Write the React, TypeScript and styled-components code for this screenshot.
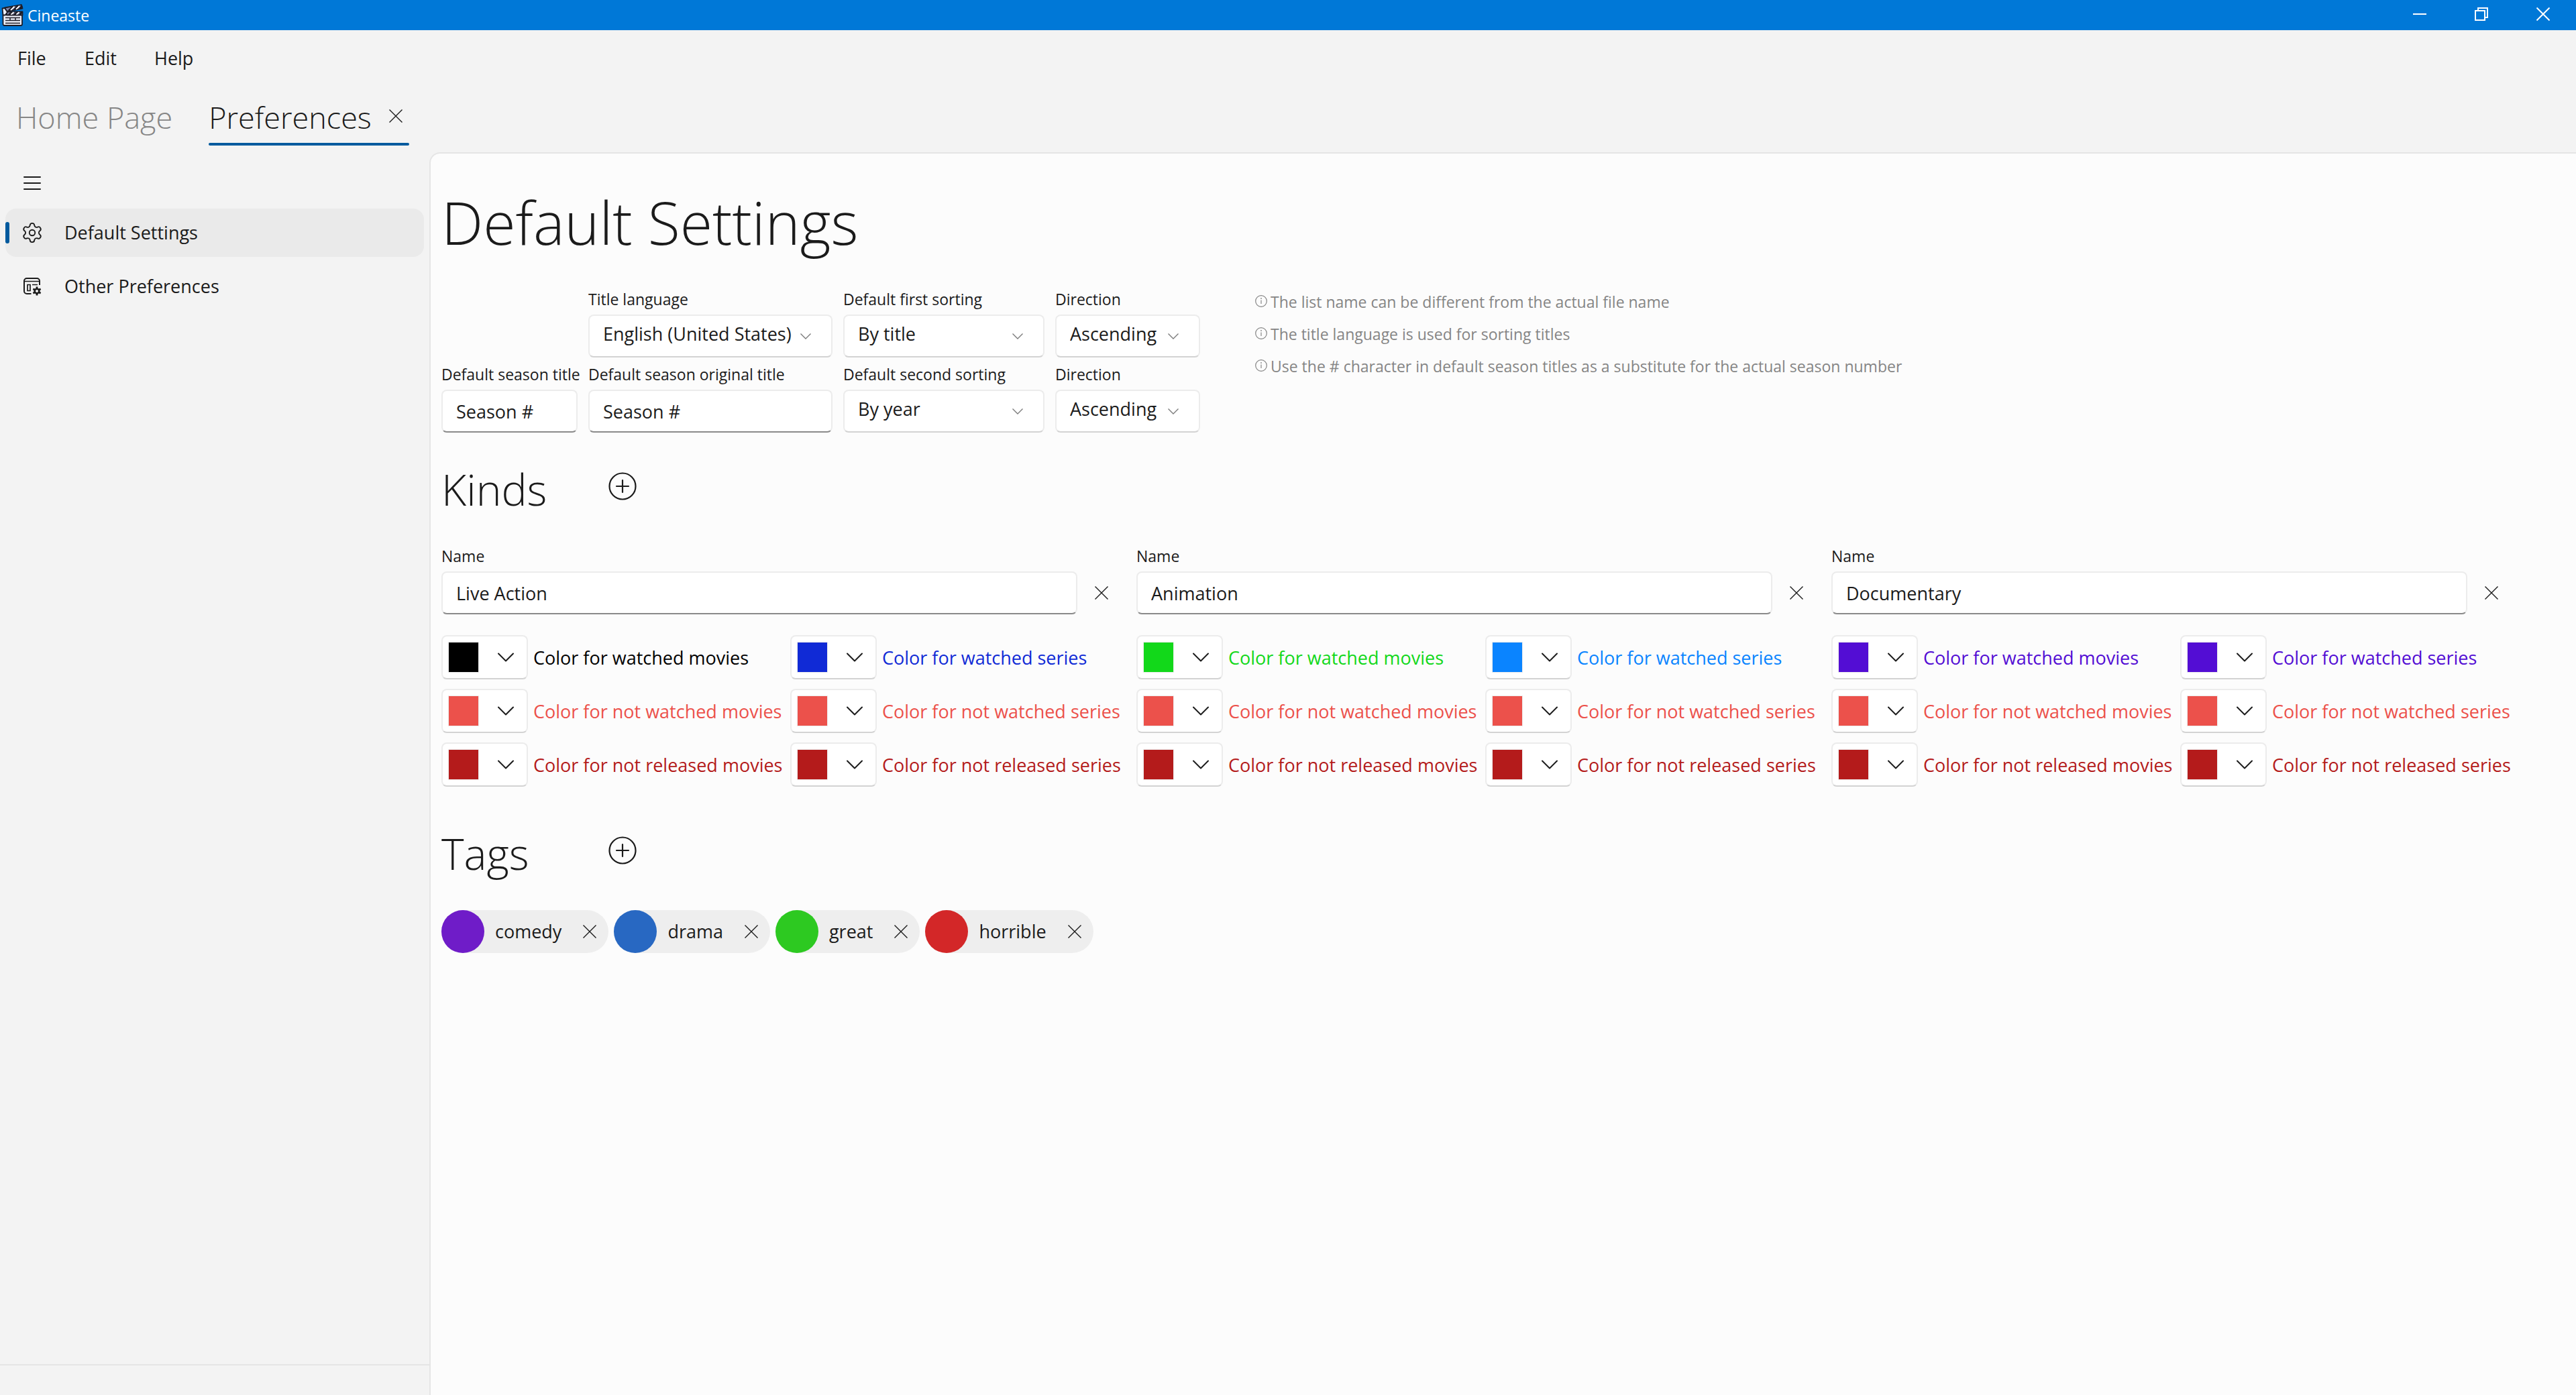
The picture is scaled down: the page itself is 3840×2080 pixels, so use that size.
import React, { useId } from 'react';
import styled, { createGlobalStyle } from 'styled-components';
import { Settings } from 'lucide-react';

const color = {
  accent: '#005a9e',
  titleBar: '#0078d7',
  chrome: '#f3f3f3',
  surface: '#fcfcfc',
  line: '#e5e5e5',
  ink: '#1b1b1b',
  muted: '#858585',
};

const GlobalStyle = createGlobalStyle`
  *, *::before, *::after { box-sizing: border-box; }
  body {
    margin: 0;
    background: ${color.chrome};
    color: ${color.ink};
    font: 400 27px/36px "Open Sans", "Noto Sans", sans-serif;
  }
  h1, h2, ul { margin: 0; padding: 0; }
  button, input, select { font: inherit; color: inherit; margin: 0; }
  button { background: none; border: 0; padding: 0; cursor: pointer; }
  svg { display: block; flex: none; }
`;

/* ---------- window frame ---------- */

const Window = styled.div`
  display: flex;
  flex-direction: column;
  min-height: 100vh;
`;

const TitleBar = styled.header`
  display: flex;
  align-items: center;
  height: 45px;
  padding: 0 3px 0 2px;
  background: ${color.titleBar};
  color: #fff;
`;

const AppName = styled.span`
  flex: 1;
  padding-left: 4px;
  font-size: 23px;
  line-height: 30px;
`;

const CaptionButton = styled.button`
  display: grid;
  place-items: center;
  align-self: flex-start;
  width: 92px;
  height: 42px;
`;

const MenuBar = styled.nav`
  display: flex;
  gap: 8px;
  height: 83px;
  padding-left: 2px;
`;

const MenuButton = styled.button`
  padding: 0 24px;
  min-width: 92px;
  text-align: left;
`;

const TabStrip = styled.div`
  display: flex;
  gap: 54px;
  height: 99px;
  padding: 0 24px 10px;
`;

const Tab = styled.div<{ $active?: boolean }>`
  display: flex;
  flex-direction: column;
  color: ${(p) => (p.$active ? color.ink : '#868686')};

  &::after {
    content: '';
    height: 4px;
    border-radius: 2px;
    background: ${(p) => (p.$active ? color.accent : 'transparent')};
  }
`;

const TabRow = styled.div`
  display: flex;
  flex: 1;
  align-items: center;
  padding-top: 8px;
`;

const TabButton = styled.button`
  font-size: 45px;
  line-height: 64px;
  font-weight: 300;
`;

const TabClose = styled.button`
  display: grid;
  place-items: center;
  width: 40px;
  height: 64px;
  margin: 0 0 4px 16px;
`;

/* ---------- body ---------- */

const Body = styled.div`
  display: flex;
  flex: 1;
`;

const Sidebar = styled.aside`
  display: flex;
  flex-direction: column;
  flex: none;
  width: 640px;
`;

const NavList = styled.nav`
  display: flex;
  flex: 1;
  flex-direction: column;
  gap: 8px;
  padding: 8px 8px 0;
`;

const MenuToggle = styled.button`
  display: grid;
  place-items: center;
  width: 80px;
  height: 76px;
  margin-bottom: -8px;
`;

const NavItem = styled.button<{ $selected?: boolean }>`
  position: relative;
  display: flex;
  align-items: center;
  gap: 8px;
  height: 72px;
  border-radius: 16px;
  background: ${(p) => (p.$selected ? '#eaeaea' : 'transparent')};
  text-align: left;

  &::before {
    content: '';
    display: ${(p) => (p.$selected ? 'block' : 'none')};
    position: absolute;
    left: 0;
    top: 20px;
    width: 6px;
    height: 32px;
    border-radius: 3px;
    background: ${color.accent};
  }
`;

const NavIcon = styled.span`
  display: grid;
  place-items: center;
  width: 80px;
`;

const SidebarFooter = styled.div`
  height: 46px;
  border-top: 2px solid ${color.line};
`;

const Content = styled.main`
  flex: 1;
  min-width: 0;
  padding: 42px 90px 42px 16px;
  background: ${color.surface};
  border: solid ${color.line};
  border-width: 2px 0 0 2px;
  border-top-left-radius: 16px;
`;

const PageTitle = styled.h1`
  font-size: 88px;
  line-height: 120px;
  font-weight: 300;
`;

const SectionHeader = styled.div<{ $gap: number }>`
  display: flex;
  align-items: flex-start;
  margin: ${(p) => p.$gap}px 0 40px;
`;

const SectionTitle = styled.h2`
  min-width: 232px;
  font-size: 64px;
  line-height: 88px;
  font-weight: 300;
`;

const AddButton = styled.button`
  display: grid;
  place-items: center;
  width: 76px;
  height: 78px;
`;

/* ---------- fields ---------- */

const DefaultsSection = styled.section`
  display: flex;
  align-items: flex-start;
  gap: 82px;
  margin-top: 40px;
`;

const FieldGrid = styled.div`
  display: grid;
  grid-template-columns: 203px 364px 300px 216px;
  gap: 10px 16px;
`;

const FieldBox = styled.div`
  display: flex;
  flex-direction: column;
  gap: 8px;
  min-width: 0;
`;

const FieldLabel = styled.label`
  font-size: 23px;
  line-height: 30px;
  white-space: nowrap;
`;

const TextInput = styled.input`
  width: 100%;
  min-width: 0;
  height: 64px;
  padding: 0 20px;
  background: #fff;
  border: 2px solid #ececec;
  border-bottom-color: #8a8a8a;
  border-radius: 8px;
`;

const SelectWrap = styled.div`
  position: relative;

  svg {
    position: absolute;
    right: 32px;
    top: 28px;
    pointer-events: none;
  }
`;

const SelectInput = styled.select`
  display: block;
  width: 100%;
  height: 64px;
  padding: 0 48px 7px 20px;
  appearance: none;
  background: #fff;
  border: 2px solid #ececec;
  border-bottom-color: #d3d3d3;
  border-radius: 8px;
`;

const Notes = styled.ul`
  display: flex;
  flex-direction: column;
  gap: 18px;
  padding-top: 4px;
  list-style: none;
  color: ${color.muted};
  font-size: 23px;
  line-height: 30px;
`;

const Note = styled.li`
  display: flex;
  gap: 5px;

  svg { margin-top: 5px; }
`;

/* ---------- kinds ---------- */

const KindGrid = styled.div`
  display: grid;
  grid-template-columns: repeat(3, minmax(0, 1fr));
  gap: 16px;
`;

const KindNameRow = styled.div`
  display: grid;
  grid-template-columns: 1fr 72px;
  align-items: end;
`;

const RemoveKind = styled.button`
  display: grid;
  place-items: center;
  height: 64px;
`;

const ColorGrid = styled.div`
  display: grid;
  grid-template-columns: 504px 1fr;
  gap: 14px 16px;
  margin-top: 31px;
`;

const ColorRow = styled.div<{ $tint: string }>`
  display: flex;
  align-items: center;
  gap: 8px;
  color: ${(p) => p.$tint};
  white-space: nowrap;
`;

const ColorCaption = styled.span`
  padding-top: 2px;
`;

const ColorButton = styled.button`
  display: flex;
  align-items: center;
  justify-content: space-between;
  flex: none;
  width: 129px;
  height: 66px;
  padding: 0 19px 0 8px;
  color: ${color.ink};
  background: #fff;
  border: 2px solid #ececec;
  border-bottom-color: #d3d3d3;
  border-radius: 8px;
`;

const Swatch = styled.span<{ $tint: string }>`
  width: 46px;
  height: 46px;
  background: ${(p) => p.$tint};
  background-clip: padding-box;
  border: 1px solid #ececec;
`;

/* ---------- tags ---------- */

const TagList = styled.ul`
  display: flex;
  flex-wrap: wrap;
  gap: 8px;
  list-style: none;
`;

const Tag = styled.li`
  display: flex;
  align-items: center;
  height: 64px;
  border-radius: 32px;
  background: #eee;
`;

const TagDot = styled.span<{ $tint: string }>`
  width: 64px;
  height: 64px;
  margin-right: 16px;
  border-radius: 50%;
  background: ${(p) => p.$tint};
`;

const TagClose = styled.button`
  display: grid;
  place-items: center;
  width: 56px;
  height: 64px;
  margin-left: 14px;
`;

/* ---------- icons ---------- */

const Logo = () => (
  <svg width="35" height="33" viewBox="0 0 35 33" aria-hidden="true">
    <g stroke="#1c1c26" strokeWidth="1.8" strokeLinejoin="round">
      <path d="M4 16h27v14a2 2 0 0 1-2 2H4.500a2 2 0 0 1-2-2V16z" fill="#eceef8" />
      <path d="M5 5.500 30 1.200l1.500 5.300L8 11z" fill="#7f83a8" />
      <path d="M8 11.500h23.500v5H8z" fill="#7f83a8" />
      <path d="M1.500 6.500 5 6l4 6-3 4.500H2.500z" fill="#eceef8" />
    </g>
    <path d="M11 10l6-6M19 8.500l6-6M27 7l4-4M11 16l5-4M19 16l5-4M27 16l4-4" stroke="#1c1c26" strokeWidth="2.600" />
    <path d="M14 9.200l5.500-5.600M22 7.800l5-5M14.500 15.600l4-3.400M22.500 15.600l4-3.400" stroke="#fff" strokeWidth="1.800" />
    <path d="M6 20.500h22M6 24.500h22M6 28.500h22M13 20.500v4M21 20.500v4" stroke="#1c1c26" strokeWidth="1.500" />
  </svg>
);

const Cross = ({ stroke = 1.4 }: { stroke?: number }) => (
  <svg width="20" height="20" viewBox="0 0 20 20" fill="none" stroke="currentColor" strokeWidth={stroke} aria-hidden="true">
    <path d="M.5.5l19 19M19.5.5l-19 19" />
  </svg>
);

const Minimize = () => (
  <svg width="20" height="20" viewBox="0 0 20 20" aria-hidden="true">
    <path d="M0 9h20v2H0z" fill="currentColor" />
  </svg>
);

const Restore = () => (
  <svg width="20" height="20" viewBox="0 0 20 20" fill="none" stroke="currentColor" strokeWidth="2" aria-hidden="true">
    <path d="M1 5h14v14H1zM5 5V1h14v14h-4" />
  </svg>
);

const Hamburger = () => (
  <svg width="26" height="20" viewBox="0 0 26 20" stroke="currentColor" strokeWidth="2" strokeLinecap="round" aria-hidden="true">
    <path d="M1 1h24M1 10h24M1 19h24" />
  </svg>
);

const WindowGear = () => (
  <svg width="28" height="28" viewBox="0 0 28 28" fill="none" stroke="currentColor" strokeWidth="2" aria-hidden="true">
    <path d="M12.500 25H6a4 4 0 0 1-4-4V6a4 4 0 0 1 4-4h15a4 4 0 0 1 4 4v6" />
    <path d="M2 6.500h23" strokeWidth="1.500" />
    <path d="M7 11.500h4v9H7zM14 11.500h8" strokeWidth="1.700" />
    <circle cx="21" cy="21" r="3.300" strokeWidth="2.600" />
    <path d="M21 14.500v3M21 24.500v3M15.400 17.800l2.600 1.400M24 22.800l2.600 1.400M26.600 17.800L24 19.200M18 22.800l-2.600 1.400" strokeWidth="2.800" />
  </svg>
);

const ChevronSmall = () => (
  <svg width="16" height="9" viewBox="0 0 16 9" fill="none" stroke="#7c7c7c" strokeWidth="1.4" aria-hidden="true">
    <path d="M.5.5L8 8l7.500-7.500" />
  </svg>
);

const ChevronLarge = () => (
  <svg width="24" height="14" viewBox="0 0 24 14" fill="none" stroke="currentColor" strokeWidth="2" strokeLinecap="round" strokeLinejoin="round" aria-hidden="true">
    <path d="M1 1.500l11 11 11-11" />
  </svg>
);

const PlusCircle = () => (
  <svg width="42" height="42" viewBox="0 0 42 42" fill="none" stroke="currentColor" strokeWidth="2.200" strokeLinecap="round" aria-hidden="true">
    <circle cx="21" cy="21" r="19.500" />
    <path d="M21 12v18M12 21h18" />
  </svg>
);

const Info = () => (
  <svg width="18" height="18" viewBox="0 0 18 18" fill="none" stroke="currentColor" strokeWidth="1.200" aria-hidden="true">
    <circle cx="9" cy="9" r="8.300" />
    <path d="M9 7.500v5.500" />
    <circle cx="9" cy="5" r=".9" fill="currentColor" stroke="none" />
  </svg>
);

/* ---------- composed parts ---------- */

const TextField = ({ label, value }: { label: string; value: string }) => {
  const id = useId();
  return (
    <FieldBox>
      <FieldLabel htmlFor={id}>{label}</FieldLabel>
      <TextInput id={id} defaultValue={value} />
    </FieldBox>
  );
};

const SelectField = ({ label, options }: { label: string; options: string[] }) => {
  const id = useId();
  return (
    <FieldBox>
      <FieldLabel htmlFor={id}>{label}</FieldLabel>
      <SelectWrap>
        <SelectInput id={id}>
          {options.map((o) => (
            <option key={o}>{o}</option>
          ))}
        </SelectInput>
        <ChevronSmall />
      </SelectWrap>
    </FieldBox>
  );
};

const ColorField = ({ label, tint }: { label: string; tint: string }) => {
  const id = useId();
  return (
    <ColorRow $tint={tint}>
      <ColorButton aria-labelledby={id}>
        <Swatch $tint={tint} />
        <ChevronLarge />
      </ColorButton>
      <ColorCaption id={id}>{label}</ColorCaption>
    </ColorRow>
  );
};

const NOT_WATCHED = '#ec514b';
const NOT_RELEASED = '#b41b1b';

const kinds = [
  { name: 'Live Action', movies: '#000000', series: '#102ad6' },
  { name: 'Animation', movies: '#12d81a', series: '#0a84ff' },
  { name: 'Documentary', movies: '#530dd4', series: '#530dd4' },
];

const tags = [
  { name: 'comedy', tint: '#6f1cc8' },
  { name: 'drama', tint: '#2868c2' },
  { name: 'great', tint: '#2dc921' },
  { name: 'horrible', tint: '#d32728' },
];

const notes = [
  'The list name can be different from the actual file name',
  'The title language is used for sorting titles',
  'Use the # character in default season titles as a substitute for the actual season number',
];

export default function App() {
  return (
    <Window>
      <GlobalStyle />
      <TitleBar>
        <Logo />
        <AppName>Cineaste</AppName>
        <CaptionButton aria-label="Minimize"><Minimize /></CaptionButton>
        <CaptionButton aria-label="Restore"><Restore /></CaptionButton>
        <CaptionButton aria-label="Close"><Cross stroke={2} /></CaptionButton>
      </TitleBar>
      <MenuBar>
        <MenuButton>File</MenuButton>
        <MenuButton>Edit</MenuButton>
        <MenuButton>Help</MenuButton>
      </MenuBar>
      <TabStrip>
        <Tab>
          <TabRow>
            <TabButton>Home Page</TabButton>
          </TabRow>
        </Tab>
        <Tab $active>
          <TabRow>
            <TabButton>Preferences</TabButton>
            <TabClose aria-label="Close tab"><Cross /></TabClose>
          </TabRow>
        </Tab>
      </TabStrip>
      <Body>
        <Sidebar>
          <NavList>
            <MenuToggle aria-label="Toggle navigation"><Hamburger /></MenuToggle>
            <NavItem $selected>
              <NavIcon><Settings size={34} strokeWidth={1.3} /></NavIcon>
              Default Settings
            </NavItem>
            <NavItem>
              <NavIcon><WindowGear /></NavIcon>
              Other Preferences
            </NavItem>
          </NavList>
          <SidebarFooter />
        </Sidebar>
        <Content>
          <PageTitle>Default Settings</PageTitle>
          <DefaultsSection>
            <FieldGrid>
              <span />
              <SelectField label="Title language" options={['English (United States)']} />
              <SelectField label="Default first sorting" options={['By title', 'By year']} />
              <SelectField label="Direction" options={['Ascending', 'Descending']} />
              <TextField label="Default season title" value="Season #" />
              <TextField label="Default season original title" value="Season #" />
              <SelectField label="Default second sorting" options={['By year', 'By title']} />
              <SelectField label="Direction" options={['Ascending', 'Descending']} />
            </FieldGrid>
            <Notes>
              {notes.map((n) => (
                <Note key={n}>
                  <Info />
                  <span>{n}</span>
                </Note>
              ))}
            </Notes>
          </DefaultsSection>

          <SectionHeader $gap={41}>
            <SectionTitle>Kinds</SectionTitle>
            <AddButton aria-label="Add kind"><PlusCircle /></AddButton>
          </SectionHeader>
          <KindGrid>
            {kinds.map((k) => (
              <section key={k.name}>
                <KindNameRow>
                  <TextField label="Name" value={k.name} />
                  <RemoveKind aria-label={`Remove ${k.name}`}><Cross /></RemoveKind>
                </KindNameRow>
                <ColorGrid>
                  <ColorField label="Color for watched movies" tint={k.movies} />
                  <ColorField label="Color for watched series" tint={k.series} />
                  <ColorField label="Color for not watched movies" tint={NOT_WATCHED} />
                  <ColorField label="Color for not watched series" tint={NOT_WATCHED} />
                  <ColorField label="Color for not released movies" tint={NOT_RELEASED} />
                  <ColorField label="Color for not released series" tint={NOT_RELEASED} />
                </ColorGrid>
              </section>
            ))}
          </KindGrid>

          <SectionHeader $gap={56}>
            <SectionTitle>Tags</SectionTitle>
            <AddButton aria-label="Add tag"><PlusCircle /></AddButton>
          </SectionHeader>
          <TagList>
            {tags.map((t) => (
              <Tag key={t.name}>
                <TagDot $tint={t.tint} />
                {t.name}
                <TagClose aria-label={`Remove ${t.name}`}><Cross /></TagClose>
              </Tag>
            ))}
          </TagList>
        </Content>
      </Body>
    </Window>
  );
}
